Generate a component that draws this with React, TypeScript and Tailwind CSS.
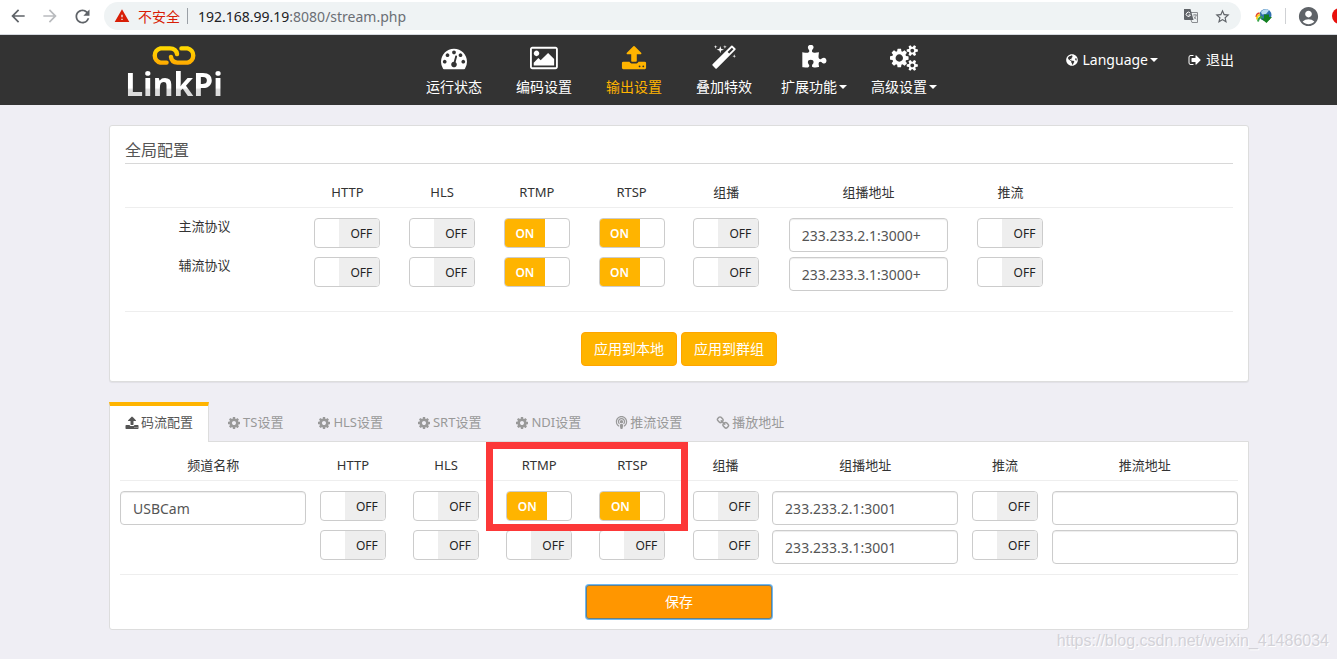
import { useState } from 'react';
import type { ReactNode } from 'react';
import { FaGlobeAmericas, FaPodcast } from 'react-icons/fa';
import {
  MdAccountCircle,
  MdArrowBack,
  MdArrowForward,
  MdRefresh,
  MdStarBorder,
  MdWarning,
} from 'react-icons/md';

// --- Icons ---
const icons = {
  dashboard: {
    width: 1792,
    path: 'M384 1152q0-53-37.5-90.5t-90.5-37.5-90.5 37.5-37.5 90.5 37.5 90.5 90.5 37.5 90.5-37.5 37.5-90.5zm192-448q0-53-37.5-90.5t-90.5-37.5-90.5 37.5-37.5 90.5 37.5 90.5 90.5 37.5 90.5-37.5 37.5-90.5zm428 481l101-382q6-26-7.5-48.5t-38.5-29.5-48 6.5-30 39.5l-101 382q-60 5-107 43.5t-63 98.5q-20 77 20 146t117 89 146-20 89-117q16-60-6-117t-72-91zm660-33q0-53-37.5-90.5t-90.5-37.5-90.5 37.5-37.5 90.5 37.5 90.5 90.5 37.5 90.5-37.5 37.5-90.5zm-640-640q0-53-37.5-90.5t-90.5-37.5-90.5 37.5-37.5 90.5 37.5 90.5 90.5 37.5 90.5-37.5 37.5-90.5zm448 192q0-53-37.5-90.5t-90.5-37.5-90.5 37.5-37.5 90.5 37.5 90.5 90.5 37.5 90.5-37.5 37.5-90.5zm320 448q0 261-141 483-19 29-54 29h-1402q-35 0-54-29-141-221-141-483 0-182 71-348t191-286 286-191 348-71 348 71 286 191 191 286 71 348z',
  },
  picture: {
    width: 1920,
    path: 'M640 576q0 80-56 136t-136 56-136-56-56-136 56-136 136-56 136 56 56 136zm1024 384v448h-1408v-192l320-320 160 160 512-512zm96-704h-1600q-13 0-22.5 9.5t-9.5 22.5v1216q0 13 9.5 22.5t22.5 9.5h1600q13 0 22.5-9.5t9.5-22.5v-1216q0-13-9.5-22.5t-22.5-9.5zm160 32v1216q0 66-47 113t-113 47h-1600q-66 0-113-47t-47-113v-1216q0-66 47-113t113-47h1600q66 0 113 47t47 113z',
  },
  upload: {
    width: 1792,
    path: 'M1344 1472q0-26-19-45t-45-19-45 19-19 45 19 45 45 19 45-19 19-45zm256 0q0-26-19-45t-45-19-45 19-19 45 19 45 45 19 45-19 19-45zm128-224v320q0 40-28 68t-68 28h-1472q-40 0-68-28t-28-68v-320q0-40 28-68t68-28h427q21 56 70.5 92t110.5 36h256q61 0 110.5-36t70.5-92h427q40 0 68 28t28 68zm-325-648q-17 40-59 40h-256v448q0 26-19 45t-45 19h-256q-26 0-45-19t-19-45v-448h-256q-42 0-59-40-17-39 14-69l448-448q18-19 45-19t45 19l448 448q31 30 14 69z',
  },
  magic: {
    width: 1792,
    path: 'M1254 581l293-293-107-107-293 293zm447-293q0 27-18 45l-1286 1286q-18 18-45 18t-45-18l-198-198q-18-18-18-45t18-45l1286-1286q18-18 45-18t45 18l198 198q18 18 18 45zm-1351-190l98 30-98 30-30 98-30-98-98-30 98-30 30-98zm350 162l196 60-196 60-60 196-60-196-196-60 196-60 60-196zm930 478l98 30-98 30-30 98-30-98-98-30 98-30 30-98zm-640-640l98 30-98 30-30 98-30-98-98-30 98-30 30-98z',
  },
  puzzle: {
    width: 1792,
    path: 'M1755 1083q0 81-44.5 135t-123.5 54q-41 0-77.5-17.5t-59-38-56.5-38-71-17.5q-110 0-110 124 0 39 16 115t15 115v5q-22 0-33 1-34 3-97.5 11.5t-115.5 13.5-98 5q-61 0-103-26.5t-42-83.5q0-37 17.5-71t38-56.5 38-59 17.5-77.5q0-79-54-123.5t-135-44.5q-84 0-143 45.5t-59 127.5q0 43 15 83t33.5 64.5 33.5 53 15 50.5q0 45-46 89-37 35-117 35-95 0-245-24-9-2-27.5-4t-27.5-4l-13-2q-1 0-3-1-2 0-2-1v-1024q2 1 17.5 3.5t34 5 21.5 3.5q150 24 245 24 80 0 117-35 46-44 46-89 0-22-15-50.5t-33.5-53-33.5-64.5-15-83q0-82 59-127.5t144-45.5q80 0 134 44.5t54 123.5q0 41-17.5 77.5t-38 59-38 56.5-17.5 71q0 57 42 83.5t103 26.5q64 0 180-15t163-17v2q-1 2-3.5 17.5t-5 34-3.5 21.5q-24 150-24 245 0 80 35 117 44 46 89 46 22 0 50.5-15t53-33.5 64.5-33.5 83-15q82 0 127.5 59t45.5 143z',
  },
  cogs: {
    width: 1920,
    path: 'M896 896q0-106-75-181t-181-75-181 75-75 181 75 181 181 75 181-75 75-181zm768 512q0-52-38-90t-90-38-90 38-38 90q0 53 37.5 90.5t90.5 37.5 90.5-37.5 37.5-90.5zm0-1024q0-52-38-90t-90-38-90 38-38 90q0 53 37.5 90.5t90.5 37.5 90.5-37.5 37.5-90.5zm-384 421v185q0 10-7 19.5t-16 10.5l-155 24q-11 35-32 76 34 48 90 115 7 11 7 20 0 12-7 19-23 30-82.5 89.5t-78.5 59.5q-11 0-21-7l-115-90q-37 19-77 31-11 108-23 155-7 24-30 24h-186q-11 0-20-7.5t-10-17.5l-23-153q-34-10-75-31l-118 89q-7 7-20 7-11 0-21-8-144-133-144-160 0-9 7-19 10-14 41-53t47-61q-23-44-35-82l-152-24q-10-1-17-9.5t-7-19.5v-185q0-10 7-19.5t16-10.5l155-24q11-35 32-76-34-48-90-115-7-11-7-20 0-12 7-20 22-30 82-89t79-59q11 0 21 7l115 90q34-18 77-32 11-108 23-154 7-24 30-24h186q11 0 20 7.5t10 17.5l23 153q34 10 75 31l118-89q8-7 20-7 11 0 21 8 144 133 144 160 0 8-7 19-12 16-42 54t-45 60q23 48 34 82l152 23q10 2 17 10.5t7 19.5zm640 533v140q0 16-149 31-12 27-30 52 51 113 51 138 0 4-4 7-122 71-124 71-8 0-46-47t-52-68q-20 2-30 2t-30-2q-14 21-52 68t-46 47q-2 0-124-71-4-3-4-7 0-25 51-138-18-25-30-52-149-15-149-31v-140q0-16 149-31 13-29 30-52-51-113-51-138 0-4 4-7 4-2 35-20t59-34 30-16q8 0 46 46.5t52 67.5q20-2 30-2t30 2q51-71 92-112l6-2q4 0 124 70 4 3 4 7 0 25-51 138 17 23 30 52 149 15 149 31zm0-1024v140q0 16-149 31-12 27-30 52 51 113 51 138 0 4-4 7-122 71-124 71-8 0-46-47t-52-68q-20 2-30 2t-30-2q-14 21-52 68t-46 47q-2 0-124-71-4-3-4-7 0-25 51-138-18-25-30-52-149-15-149-31v-140q0-16 149-31 13-29 30-52-51-113-51-138 0-4 4-7 4-2 35-20t59-34 30-16q8 0 46 46.5t52 67.5q20-2 30-2t30 2q51-71 92-112l6-2q4 0 124 70 4 3 4 7 0 25-51 138 17 23 30 52 149 15 149 31z',
  },
  cog: {
    width: 1792,
    path: 'M1152 896q0-106-75-181t-181-75-181 75-75 181 75 181 181 75 181-75 75-181zm512-109v222q0 12-8 23t-20 13l-185 28q-19 54-39 91 35 50 107 138 10 12 10 25t-9 23q-27 37-99 108t-94 71q-12 0-26-9l-138-108q-44 23-91 38-16 136-29 186-7 28-36 28h-222q-14 0-24.5-8.5t-11.5-21.5l-28-184q-49-16-90-37l-141 107q-10 9-25 9-14 0-25-11-126-114-165-168-7-10-7-23 0-12 8-23 15-21 51-66.5t54-70.5q-27-50-41-99l-183-27q-13-2-21-12.5t-8-23.5v-222q0-12 8-23t19-13l186-28q14-46 39-92-40-57-107-138-10-12-10-24 0-10 9-23 26-36 98.5-107.5t94.5-71.5q13 0 26 10l138 107q44-23 91-38 16-136 29-186 7-28 36-28h222q14 0 24.5 8.5t11.5 21.5l28 184q49 16 90 37l142-107q9-9 24-9 13 0 25 10 129 119 165 170 7 8 7 22 0 12-8 23-15 21-51 66.5t-54 70.5q26 50 41 98l183 28q13 2 21 12.5t8 23.5z',
  },
  link: {
    width: 1792,
    path: 'M1520 1216q0-40-28-68l-208-208q-28-28-68-28-42 0-72 32 3 3 19 18.5t21.5 21.5 15 19 13 25.5 3.5 27.5q0 40-28 68t-68 28q-15 0-27.5-3.5t-25.5-13-19-15-21.5-21.5-18.5-19q-33 31-33 73 0 40 28 68l206 207q27 27 68 27 40 0 68-26l147-146q28-28 28-67zm-703-705q0-40-28-68l-206-207q-28-28-68-28-39 0-68 27l-147 146q-28 28-28 67 0 40 28 68l208 208q27 27 68 27 42 0 72-31-3-3-19-18.5t-21.5-21.5-15-19-13-25.5-3.5-27.5q0-40 28-68t68-28q15 0 27.5 3.5t25.5 13 19 15 21.5 21.5 18.5 19q33-31 33-73zm895 705q0 120-85 203l-147 146q-83 83-203 83-121 0-204-85l-206-207q-83-83-83-203 0-123 88-209l-88-88q-86 88-208 88-120 0-204-84l-208-208q-84-84-84-204t85-203l147-146q83-83 203-83 121 0 204 85l206 207q83 83 83 203 0 123-88 209l88 88q86-88 208-88 120 0 204 84l208 208q84 84 84 204z',
  },
  signOut: {
    width: 1792,
    path: 'M704 1440q0 4 1 20t.5 26.5-3 23.5-10 19.5-20.5 6.5h-320q-119 0-203.5-84.5t-84.5-203.5v-704q0-119 84.5-203.5t203.5-84.5h320q13 0 22.5 9.5t9.5 22.5q0 4 1 20t.5 26.5-3 23.5-10 19.5-20.5 6.5h-320q-66 0-113 47t-47 113v704q0 66 47 113t113 47h312l11.5 1 11.5 3 8 5.5 7 9 2 13.5zm928-544q0 26-19 45l-544 544q-19 19-45 19t-45-19-19-45v-288h-448q-26 0-45-19t-19-45v-384q0-26 19-45t45-19h448v-288q0-26 19-45t45-19 45 19l544 544q19 19 19 45z',
  },
};

type IconName = keyof typeof icons;

function Icon({ name, className }: { name: IconName; className: string }) {
  const icon = icons[name];
  return (
    <svg viewBox={`0 0 ${icon.width} 1792`} fill="currentColor" aria-hidden="true" className={className}>
      <path d={icon.path} />
    </svg>
  );
}

function Caret() {
  return <span className="border-x-4 border-t-4 border-x-transparent border-t-current" />;
}

// --- Browser toolbar ---
function TranslateIcon() {
  return (
    <svg viewBox="0 0 14 14" className="h-3.5 w-3.5" aria-hidden="true">
      <path d="M5 3.500h8.500v10H8L7 11" fill="none" stroke="#8a8d91" />
      <path d="M0 0h6.500l3 11H1a1 1 0 0 1-1-1z" fill="#5f6368" />
      <path d="M6.200 4.200A2.100 2.100 0 1 0 6.400 6H4.600" fill="none" stroke="#fff" />
      <path d="M9 6h4M11 5v1M12.200 6c-.3 2-1.500 3.200-2.400 4M10 7.500c.5 1.200 1.500 2 2.400 2.600" fill="none" stroke="#77797d" strokeWidth=".8" />
    </svg>
  );
}

function DownloaderIcon() {
  return (
    <svg viewBox="0 0 18 16" className="h-4 w-[18px]" aria-hidden="true">
      <circle cx="10.500" cy="7" r="6" fill="#2f6fae" />
      <path d="M6 4C8 .8 12 .6 14 2.600L11 6 7 6.500z" fill="#b9dcf2" />
      <path d="M1.200 9c0-2 1.400-3.600 3.400-4" fill="none" stroke="#e5452c" strokeWidth="1.500" />
      <path d="M2 11.500C1.800 9 3 7 5.200 6.600" fill="none" stroke="#f7d117" strokeWidth="1.800" />
      <path d="M3 13.500C3.400 10.500 5 9 7.500 9" fill="none" stroke="#3aa648" strokeWidth="2" />
      <path d="M9 6.500h5V9h3l-5.500 6L6 10.500h3z" fill="#13801f" />
    </svg>
  );
}

function BrowserBar() {
  return (
    <div className="flex h-[35px] items-center overflow-hidden border-b border-[#d5d9df] bg-white pb-0.5 pl-2 text-[#5f6368]">
      <button type="button" aria-label="后退"><MdArrowBack size={20} /></button>
      <button type="button" aria-label="前进" className="ml-3 text-[#b9bbbe]"><MdArrowForward size={20} /></button>
      <button type="button" aria-label="刷新" className="ml-3"><MdRefresh size={21} /></button>
      <div className="ml-[11px] flex h-7 min-w-0 flex-1 items-center rounded-full bg-[#eff3f4] px-2.5">
        <MdWarning size={16} className="text-[#d81e06]" />
        <span className="ml-2 text-[14px] text-[#d81e06]">不安全</span>
        <span className="ml-[7px] h-4 w-px bg-[#9aa0a6]" />
        <span className="ml-2.5 flex-1 text-[14px] text-[#202124]">
          192.168.99.19<span className="text-[#6b6f74]">:8080/stream.php</span>
        </span>
        <button type="button" aria-label="翻译"><TranslateIcon /></button>
        <button type="button" aria-label="收藏" className="ml-4"><MdStarBorder size={17} /></button>
      </div>
      <div className="ml-3.5"><DownloaderIcon /></div>
      <span className="ml-3 h-4 w-px bg-[#cfd1d4]" />
      <button type="button" aria-label="用户" className="ml-[11px]"><MdAccountCircle size={23} /></button>
      <div className="ml-3 w-[5px] overflow-hidden">
        <div className="h-4 w-4 rounded-full bg-[#e8100c]" />
      </div>
    </div>
  );
}

// --- Site navigation ---
const navItems: { icon: IconName; label: string; active?: boolean; menu?: boolean }[] = [
  { icon: 'dashboard', label: '运行状态' },
  { icon: 'picture', label: '编码设置' },
  { icon: 'upload', label: '输出设置', active: true },
  { icon: 'magic', label: '叠加特效' },
  { icon: 'puzzle', label: '扩展功能', menu: true },
  { icon: 'cogs', label: '高级设置', menu: true },
];

function Logo() {
  return (
    <a href="#" className="flex w-[130px] flex-col items-center pt-[11px]">
      <svg viewBox="0 0 136 56" className="h-[19px] w-[46px]" aria-hidden="true">
        <defs>
          <linearGradient id="chain" gradientUnits="userSpaceOnUse" x1="0" y1="0" x2="0" y2="56">
            <stop offset="0" stopColor="#ffdc00" />
            <stop offset="1" stopColor="#ffa800" />
          </linearGradient>
        </defs>
        <g fill="none" stroke="url(#chain)" strokeWidth="13" strokeLinecap="round">
          <path d="M46 49H28A21.500 21.500 0 0 1 28 7H56Q74 7 77 24" />
          <path d="M90 7h18a21.500 21.500 0 0 1 0 42H78Q61 49 59 32" />
        </g>
      </svg>
      <span className="bg-linear-to-b from-white from-60% to-[#dcdcdc] to-65% bg-clip-text text-[32px] leading-[38px] font-bold text-transparent">
        LinkPi
      </span>
    </a>
  );
}

function SiteHeader() {
  return (
    <header className="bg-[#333333] pl-[21px] text-[14px] text-white">
      <div className="mx-auto flex h-[70px] max-w-[1140px]">
        <Logo />
        <nav className="ml-[170px] flex">
          {navItems.map((item) => (
            <a
              key={item.label}
              href="#"
              className={`flex w-[90px] flex-col items-center pt-2.5 ${item.active ? 'text-[#ffb400]' : ''}`}
            >
              <Icon name={item.icon} className="h-[26px]" />
              <span className="mt-1.5 flex items-center gap-0.5 leading-5">
                {item.label}
                {item.menu && <Caret />}
              </span>
            </a>
          ))}
        </nav>
        <div className="ml-auto flex items-start gap-[30px] pt-[15px] pr-[15px] leading-5">
          <a href="#" className="flex items-center gap-[5px]">
            <FaGlobeAmericas size={12} />
            <span className="flex items-center gap-0.5">Language<Caret /></span>
          </a>
          <a href="#" className="flex items-center gap-1">
            <Icon name="signOut" className="h-3.5" />
            退出
          </a>
        </div>
      </div>
    </header>
  );
}

// --- Form controls ---
function Switch({ label, on = false }: { label: string; on?: boolean }) {
  const [checked, setChecked] = useState(on);

  return (
    <label className="mx-auto flex h-[30px] w-[66px] cursor-pointer overflow-hidden rounded border border-[#cccccc] bg-white text-[12px] leading-[30px]">
      <input
        type="checkbox"
        aria-label={label}
        className="sr-only"
        checked={checked}
        onChange={(e) => setChecked(e.target.checked)}
      />
      {checked ? (
        <span className="w-10 bg-[#ffb400] text-center font-semibold text-white">ON</span>
      ) : (
        <span className="ml-6 w-10 bg-[#eeeeee] pl-1 text-center text-[#222222]">OFF</span>
      )}
    </label>
  );
}

function TextBox({ label, value = '' }: { label: string; value?: string }) {
  return (
    <input
      type="text"
      aria-label={label}
      defaultValue={value}
      className="block h-[34px] w-full rounded border border-[#cccccc] bg-white px-3 text-[14px] text-[#555555] shadow-[inset_0_1px_1px_rgba(0,0,0,0.075)]"
    />
  );
}

const protocols = ['HTTP', 'HLS', 'RTMP', 'RTSP', '组播'];

const globalRows = [
  { name: '主流协议', on: [false, false, true, true, false], address: '233.233.2.1:3000+' },
  { name: '辅流协议', on: [false, false, true, true, false], address: '233.233.3.1:3000+' },
];

const channelRows = [
  { name: 'USBCam', on: [false, false, true, true, false], address: '233.233.2.1:3001' },
  { name: '', on: [false, false, false, false, false], address: '233.233.3.1:3001' },
];

function HeadCell({ className, children }: { className: string; children?: ReactNode }) {
  return (
    <th scope="col" className={`border-b border-[#eeeeee] font-normal ${className}`}>
      {children}
    </th>
  );
}

const tableClass = 'w-full table-fixed border-separate border-spacing-0 text-[13px] leading-5 text-[#333333]';
const bodyClass = '[&_td]:pb-[5px] [&_td]:align-top [&_th]:align-top [&>tr:first-child>*]:pt-2.5';

function GlobalPanel() {
  return (
    <section className="rounded-[3px] border border-[#dddddd] bg-white px-[15px] pt-[11px] pb-[15px] shadow-[0_1px_1px_rgba(0,0,0,0.06)]">
      <h2 className="border-b border-[#d8d8d8] text-[16px] leading-[26px] text-[#555555]">全局配置</h2>
      <table className={tableClass}>
        <thead>
          <tr>
            <HeadCell className="w-[15.8%] pt-[18px] pb-[5px]" />
            {protocols.map((p) => (
              <HeadCell key={p} className="w-[8.55%] pt-[18px] pb-[5px]">{p}</HeadCell>
            ))}
            <HeadCell className="w-[17.1%] pt-[18px] pb-[5px]">组播地址</HeadCell>
            <HeadCell className="w-[8.55%] pt-[18px] pb-[5px]">推流</HeadCell>
            <HeadCell className="pt-[18px] pb-[5px]" />
          </tr>
        </thead>
        <tbody className={bodyClass}>
          {globalRows.map((row) => (
            <tr key={row.name}>
              <th scope="row" className="pr-4 leading-4 font-normal">{row.name}</th>
              {protocols.map((p, i) => (
                <td key={p}><Switch label={`${row.name} ${p}`} on={row.on[i]} /></td>
              ))}
              <td className="px-[15px]"><TextBox label={`${row.name} 组播地址`} value={row.address} /></td>
              <td><Switch label={`${row.name} 推流`} /></td>
              <td />
            </tr>
          ))}
        </tbody>
      </table>
      <div className="mt-[15px] flex justify-center gap-1 border-t border-[#eeeeee] pt-5">
        {['应用到本地', '应用到群组'].map((text) => (
          <button
            key={text}
            type="button"
            className="h-[34px] rounded border border-[#ffa500] bg-[#ffb400] px-3 pb-0.5 text-[14px] text-white"
          >
            {text}
          </button>
        ))}
      </div>
    </section>
  );
}

const tabs: { icon: IconName | 'podcast'; label: string }[] = [
  { icon: 'upload', label: '码流配置' },
  { icon: 'cog', label: 'TS设置' },
  { icon: 'cog', label: 'HLS设置' },
  { icon: 'cog', label: 'SRT设置' },
  { icon: 'cog', label: 'NDI设置' },
  { icon: 'podcast', label: '推流设置' },
  { icon: 'link', label: '播放地址' },
];

function ChannelPanel() {
  const [active, setActive] = useState('码流配置');

  return (
    <section className="mt-5">
      <div role="tablist" className="relative z-10 flex h-10 gap-0.5">
        {tabs.map((tab) => (
          <button
            key={tab.label}
            type="button"
            role="tab"
            aria-selected={tab.label === active}
            onClick={() => setActive(tab.label)}
            className={`flex items-center gap-0.5 border-x border-t-4 px-[15px] pb-[3px] text-[13px] ${
              tab.label === active
                ? 'border-x-[#dddddd] border-t-[#ffb400] bg-white text-[#555555]'
                : 'border-transparent text-[#999999]'
            }`}
          >
            {tab.icon === 'podcast' ? <FaPodcast size={13} /> : <Icon name={tab.icon} className="h-3.5" />}
            {tab.label}
          </button>
        ))}
      </div>
      <div className="relative -mt-px rounded-b-[3px] border border-[#dddddd] bg-white p-2.5 pt-0">
        <table className={tableClass}>
          <thead>
            <tr>
              <HeadCell className="w-1/6 pt-[13px] pb-[5px]">频道名称</HeadCell>
              {protocols.map((p) => (
                <HeadCell key={p} className="w-1/12 pt-[13px] pb-[5px]">{p}</HeadCell>
              ))}
              <HeadCell className="w-1/6 pt-[13px] pb-[5px]">组播地址</HeadCell>
              <HeadCell className="w-1/12 pt-[13px] pb-[5px]">推流</HeadCell>
              <HeadCell className="w-1/6 pt-[13px] pb-[5px]">推流地址</HeadCell>
            </tr>
          </thead>
          <tbody className={bodyClass}>
            {channelRows.map((row) => (
              <tr key={row.address}>
                <td>{row.name && <TextBox label="频道名称" value={row.name} />}</td>
                {protocols.map((p, i) => (
                  <td key={p}><Switch label={`${row.address} ${p}`} on={row.on[i]} /></td>
                ))}
                <td><TextBox label="组播地址" value={row.address} /></td>
                <td><Switch label={`${row.address} 推流`} /></td>
                <td><TextBox label="推流地址" /></td>
              </tr>
            ))}
          </tbody>
        </table>
        <div className="mt-[5px] flex justify-center border-t border-[#eeeeee] pt-2.5">
          <button
            type="button"
            className="h-[34px] w-1/6 rounded-[3px] border border-[#6b7f80] bg-[#ff9600] pb-0.5 text-[14px] text-white ring-1 ring-[#6cb8f5]"
          >
            保存
          </button>
        </div>
        {/* highlight around RTMP / RTSP */}
        <div className="pointer-events-none absolute top-0 left-[376px] h-[89px] w-[202px] border-[7px] border-[#fc3838]" />
      </div>
    </section>
  );
}

export default function App() {
  return (
    <div className="relative min-h-screen bg-[#efeef4] font-['Noto_Sans','Noto_Sans_CJK_SC',sans-serif]">
      <BrowserBar />
      <SiteHeader />
      <main className="pt-5 pb-[29px] pl-[21px]">
        <div className="mx-auto max-w-[1140px]">
          <GlobalPanel />
          <ChannelPanel />
        </div>
      </main>
      <div className="pointer-events-none absolute right-2 bottom-2 font-['Liberation_Sans',sans-serif] text-[16px] leading-5 text-[#d3d2d8] [text-shadow:1px_1px_0_#ffffff]">
        https://blog.csdn.net/weixin_41486034
      </div>
    </div>
  );
}
